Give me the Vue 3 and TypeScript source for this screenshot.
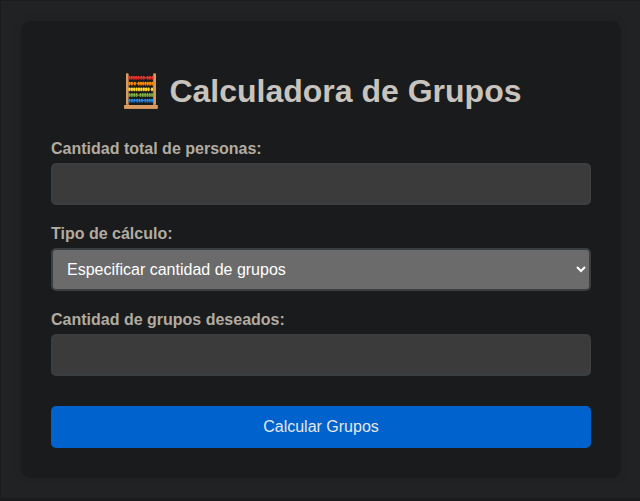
<script setup lang="ts">
import { ref } from 'vue'

type Mode = 'groups' | 'people'

const total = ref<string>('')
const mode = ref<Mode>('groups')
const amount = ref<string>('')
</script>

<template>
  <div class="page">
    <main class="card">
      <h1>🧮 Calculadora de Grupos</h1>
      <form @submit.prevent>
        <label for="total">Cantidad total de personas:</label>
        <input id="total" v-model="total" type="text" />
        <label for="mode">Tipo de cálculo:</label>
        <select id="mode" v-model="mode">
          <option value="groups">Especificar cantidad de grupos</option>
        </select>
        <label for="amount">Cantidad de grupos deseados:</label>
        <input id="amount" v-model="amount" type="text" />
        <button type="submit">Calcular Grupos</button>
      </form>
    </main>
  </div>
</template>

<style>
body {
  background: #181a1b;
}
</style>

<style scoped>
.page {
  box-sizing: border-box;
  height: 501px;
  padding: 20px;
  border: 1px solid #1a1c1d;
  border-right: 0;
  border-bottom-width: 3px;
  background: #202223;
  font-family: "Liberation Sans", Arial, sans-serif;
}
.card {
  box-sizing: border-box;
  width: 600px;
  height: 457px;
  padding: 30px;
  border-radius: 10px;
  background: #191b1c;
  box-shadow: 0 0 10px rgba(0, 0, 0, 0.1);
}
h1 {
  margin: 22px 0 31px;
  height: 36px;
  line-height: 36px;
  font-size: 32px;
  text-align: center;
  white-space: nowrap;
  color: #c8c3bc;
}
form {
  display: flex;
  flex-direction: column;
}
label {
  height: 18px;
  margin-bottom: 5px;
  line-height: 18px;
  font-size: 16px;
  font-weight: 700;
  color: #b2aba1;
}
input,
select,
button {
  box-sizing: border-box;
  width: 540px;
  font-family: inherit;
  font-size: 16px;
  outline: none;
}
input {
  height: 42px;
  margin: 0 0 20px;
  padding: 10px;
  border: 2px solid #3a3e41;
  border-radius: 5px;
  background: #3b3b3b;
  color: #fff;
}
select {
  height: 43px;
  margin: 0 0 20px;
  padding: 10px;
  border: 2px solid #3a3e41;
  border-radius: 5px;
  background-color: #6b6b6b;
  color: #fff;
}
button {
  height: 42px;
  margin: 10px 0 0;
  padding: 0;
  border: 0;
  border-radius: 5px;
  background: #0062cc;
  color: #e8e6e3;
}
</style>
